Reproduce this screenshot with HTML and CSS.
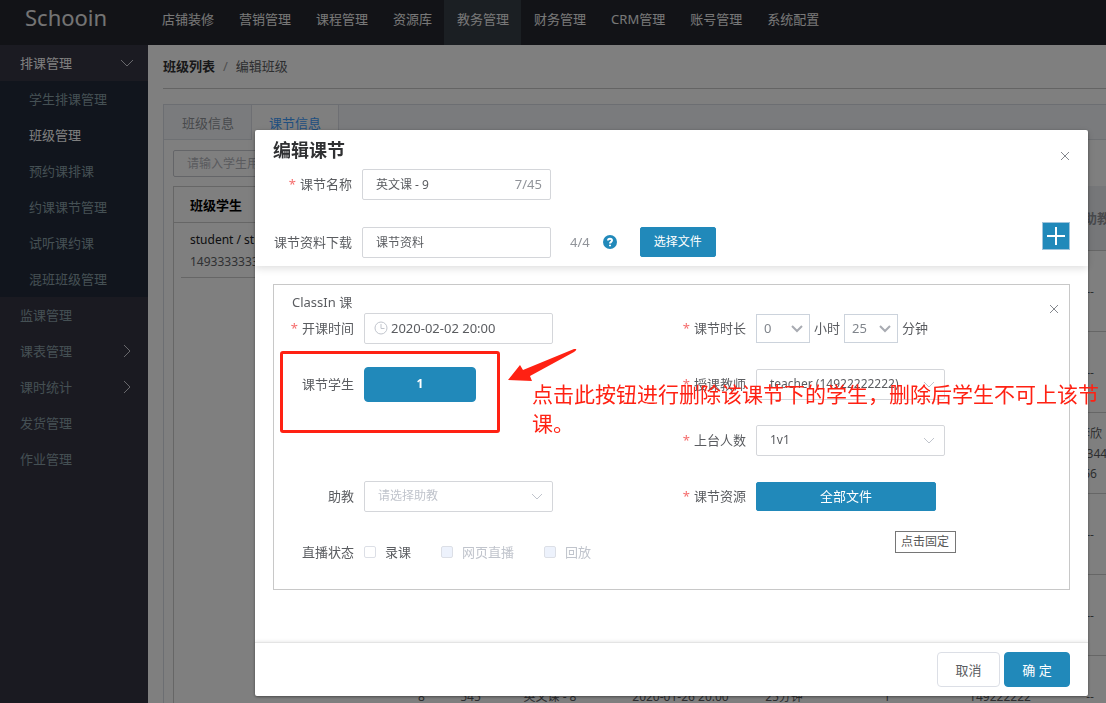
FILE: index.html
```html
<!DOCTYPE html>
<html lang="zh-CN">
<head>
<meta charset="utf-8">
<meta name="viewport" content="width=device-width, initial-scale=1">
<title>编辑课节 - Schooin</title>
<link rel="stylesheet" href="styles.css">
</head>
<body>
<div class="app">
  <header class="topbar">
    <div class="logo">Schooin</div>
    <nav class="topnav">
      <a href="#">店铺装修</a>
      <a href="#">营销管理</a>
      <a href="#">课程管理</a>
      <a href="#">资源库</a>
      <a href="#" class="active">教务管理</a>
      <a href="#">财务管理</a>
      <a href="#">CRM管理</a>
      <a href="#">账号管理</a>
      <a href="#">系统配置</a>
    </nav>
  </header>
  <div class="shell">
    <nav class="sidebar">
      <a href="#" class="menu-item open">排课管理
        <svg class="chevron" viewBox="0 0 14 14"><path d="M1 4l6 6 6-6"/></svg>
      </a>
      <div class="submenu">
        <a href="#" class="menu-item">学生排课管理</a>
        <a href="#" class="menu-item current">班级管理</a>
        <a href="#" class="menu-item">预约课排课</a>
        <a href="#" class="menu-item">约课课节管理</a>
        <a href="#" class="menu-item">试听课约课</a>
        <a href="#" class="menu-item">混班班级管理</a>
      </div>
      <a href="#" class="menu-item">监课管理</a>
      <a href="#" class="menu-item">课表管理
        <svg class="chevron" viewBox="0 0 14 14"><path d="M4 1l6 6-6 6"/></svg>
      </a>
      <a href="#" class="menu-item">课时统计
        <svg class="chevron" viewBox="0 0 14 14"><path d="M4 1l6 6-6 6"/></svg>
      </a>
      <a href="#" class="menu-item">发货管理</a>
      <a href="#" class="menu-item">作业管理</a>
    </nav>
    <main class="content">
      <div class="breadcrumb"><a href="#">班级列表</a><span class="slash">/</span><span>编辑班级</span></div>
      <section class="tabs">
        <div class="tab-bar">
          <button type="button" class="tab">班级信息</button>
          <button type="button" class="tab selected">课节信息</button>
        </div>
        <div class="tab-body">
          <input class="search" type="text" placeholder="请输入学生用户名" aria-label="搜索学生">
          <div class="columns">
            <div class="students">
              <h2>班级学生</h2>
              <div class="student">
                <div>student / student</div>
                <div class="phone">14933333333</div>
              </div>
            </div>
            <div class="table-wrap">
              <table class="lessons">
                <colgroup><col class="c-index"><col class="c-id"><col class="c-name"><col class="c-time"><col class="c-length"><col class="c-count"><col class="c-teacher"><col class="c-helper"></colgroup>
                <thead><tr><th></th><th></th><th></th><th></th><th></th><th></th><th></th><th class="helper">助教</th></tr></thead>
                <tbody>
                  <tr><td></td><td></td><td></td><td></td><td></td><td></td><td></td><td>--</td></tr>
                  <tr><td></td><td></td><td></td><td></td><td></td><td></td><td></td><td>--</td></tr>
                  <tr><td></td><td></td><td></td><td></td><td></td><td></td><td></td><td>李欣<br>149334455<br>56</td></tr>
                  <tr><td></td><td></td><td></td><td></td><td></td><td></td><td></td><td>--</td></tr>
                  <tr><td></td><td></td><td></td><td></td><td></td><td></td><td></td><td>--</td></tr>
                  <tr><td>8</td><td>545</td><td>英文课 - 8</td><td>2020-01-26 20:00</td><td>25分钟</td><td>1</td><td>149222222</td><td>--</td></tr>
                </tbody>
              </table>
            </div>
          </div>
        </div>
      </section>
    </main>
  </div>
</div>

<div class="mask">
  <form class="modal" role="dialog" aria-labelledby="modal-title">
    <header class="modal-head">
      <div class="title-row">
        <h1 id="modal-title">编辑课节</h1>
        <button type="button" class="close" aria-label="关闭"><svg viewBox="0 0 10 10"><path d="M1 1l8 8M9 1l-8 8"/></svg></button>
      </div>
      <div class="field">
        <label class="label required" for="lesson-name">课节名称</label>
        <div class="control wide">
          <input id="lesson-name" type="text" value="英文课 - 9">
          <span class="counter">7/45</span>
        </div>
      </div>
      <div class="field material">
        <label class="label" for="material">课节资料下载</label>
        <div class="control wide"><input id="material" type="text" value="课节资料"></div>
        <span class="quota">4/4</span>
        <svg class="help" viewBox="0 0 14 14"><circle cx="7" cy="7" r="7"/><path d="M5 5.6C5 3.1 9 3.1 9 5.5C9 6.9 7 6.8 7 8.5M7 9.7v1.6"/></svg>
        <button type="button" class="btn primary pick">选择文件</button>
        <button type="button" class="add" aria-label="添加"><svg viewBox="0 0 18 18"><path d="M9 0v18M0 9h18"/></svg></button>
      </div>
    </header>

    <div class="modal-body">
      <section class="card">
        <div class="card-title">ClassIn 课</div>
        <button type="button" class="close card-close" aria-label="移除"><svg viewBox="0 0 10 10"><path d="M1 1l8 8M9 1l-8 8"/></svg></button>
        <div class="rows">
          <div class="field">
            <label class="label required" for="start">开课时间</label>
            <div class="control wide">
              <svg class="clock" viewBox="0 0 14 14"><circle cx="7" cy="7" r="6"/><path d="M7 3v4.5h3.5"/></svg>
              <input id="start" class="date" type="text" value="2020-02-02 20:00">
            </div>
          </div>
          <div class="field">
            <label class="label required" for="hours">课节时长</label>
            <div class="duration">
              <span class="control small"><select id="hours"><option>0</option></select><svg class="arrow" viewBox="0 0 12 12"><path d="M1 4l5 5 5-5"/></svg></span>
              <span>小时</span>
              <span class="control small"><select aria-label="分钟"><option>25</option></select><svg class="arrow" viewBox="0 0 12 12"><path d="M1 4l5 5 5-5"/></svg></span>
              <span>分钟</span>
            </div>
          </div>
          <div class="field">
            <label class="label" for="students">课节学生</label>
            <button id="students" type="button" class="btn primary count">1</button>
          </div>
          <div class="field">
            <label class="label required" for="teacher">授课教师</label>
            <div class="control wide"><select id="teacher"><option>teacher (14922222222)</option></select><svg class="arrow" viewBox="0 0 12 12"><path d="M1 4l5 5 5-5"/></svg></div>
          </div>
          <div></div>
          <div class="field">
            <label class="label required" for="seats">上台人数</label>
            <div class="control wide"><select id="seats"><option>1v1</option></select><svg class="arrow" viewBox="0 0 12 12"><path d="M1 4l5 5 5-5"/></svg></div>
          </div>
          <div class="field">
            <label class="label" for="assistant">助教</label>
            <div class="control wide"><select id="assistant" class="empty"><option>请选择助教</option></select><svg class="arrow" viewBox="0 0 12 12"><path d="M1 4l5 5 5-5"/></svg></div>
          </div>
          <div class="field">
            <label class="label required" for="files">课节资源</label>
            <button id="files" type="button" class="btn primary files">全部文件</button>
          </div>
          <div class="field">
            <span class="label">直播状态</span>
            <div class="checks">
              <label><input type="checkbox">录课</label>
              <label class="disabled"><input type="checkbox" disabled>网页直播</label>
              <label class="disabled"><input type="checkbox" disabled>回放</label>
            </div>
          </div>
        </div>
        <span class="tooltip">点击固定</span>
      </section>
    </div>

    <footer class="modal-foot">
      <button type="button" class="btn cancel">取消</button>
      <button type="submit" class="btn primary ok">确 定</button>
    </footer>
  </form>
</div>

<div class="callout-box"></div>
<svg class="callout-arrow" viewBox="0 0 72 34"><path d="M70 1Q71 2 68 4L24 28L26 33L2 32L14 17L17 22L68 1Z"/></svg>
<p class="callout-text">点击此按钮进行删除该课节下的学生，删除后学生不可上该节课。</p>
</body>
</html>
```
FILE: styles.css
```css
* { box-sizing: border-box; }

body {
  margin: 0;
  font: 13px/20px "Noto Sans", "Noto Sans CJK SC", sans-serif;
  color: #5a5c60;
  background: #fff;
}

a { color: inherit; text-decoration: none; }
button, input, select { font: inherit; color: inherit; margin: 0; }
button { cursor: pointer; }
svg { fill: none; stroke: currentColor; flex: none; }

/* page shell */
.app { display: flex; flex-direction: column; height: 100vh; overflow: hidden; }
.topbar { display: flex; height: 45px; flex: none; background: #24262e; color: #fff; }
.logo { width: 149px; padding-left: 25px; font-size: 22px; line-height: 34px; color: #e8e8e8; }
.topnav { display: flex; white-space: nowrap; }
.topnav a { padding: 0 12px 0 13px; line-height: 39px; color: #f0f0f0; }
.topnav .active { background: #363e46; }
.shell { display: flex; flex: 1; min-height: 0; }

.sidebar { width: 148px; flex: none; background: #343442; color: #8ba0a8; line-height: 18px; }
.menu-item { display: flex; align-items: center; justify-content: space-between; height: 36px; padding: 0 14px 1px 20px; }
.menu-item.open { color: #fff; background: #363644; }
.submenu { background: #222b3a; }
.submenu .menu-item { padding-left: 29px; }
.submenu .current { color: #fff; }
.chevron { width: 14px; height: 14px; color: #d0d0d8; }

.content { flex: 1; min-width: 0; padding-left: 15px; overflow: hidden; }
.breadcrumb { height: 44px; line-height: 42px; border-bottom: 1px solid #c8c8c8; }
.breadcrumb a { font-weight: 700; color: #303133; }
.slash { margin: 0 8px; color: #a0a0a0; }
.tabs { margin-top: 15px; border: 1px solid #d8dce4; border-right: 0; min-height: 650px; }
.tab-bar { display: flex; height: 35px; background: #f5f7fa; border-bottom: 1px solid #dde0e6; }
.tab { height: 35px; padding: 0 17px 0 18px; border: 0; border-right: 1px solid #dcdfe6; background: transparent; color: #909399; }
.tab.selected { padding-left: 17px; background: #fff; color: #409eff; }
.tab-body { padding: 10px 0 0 9px; }
.search { display: block; width: 200px; height: 27px; padding: 0 13px; border: 1px solid #c8cad0; background: #fff; border-radius: 2px; font-size: 12px; }
.search::placeholder { color: #b4b6bc; opacity: 1; }
.columns { display: flex; gap: 7px; margin-top: 9px; }
.students { width: 209px; flex: none; min-height: 600px; border: 1px solid #ccc; border-right: 0; }
.students h2 { margin: 0; height: 36px; padding-left: 16px; font-size: 13px; line-height: 36px; color: #000; border-bottom: 1px solid #ccc; }
.student { margin-left: 7px; padding: 6px 0 4px 9px; font-size: 12px; line-height: 22px; color: #202124; border-bottom: 1px solid #ccc; }
.phone { color: #606266; }
.table-wrap { flex: 1; overflow: hidden; }
.lessons { table-layout: fixed; width: 745px; border-collapse: collapse; font-size: 12px; text-align: center; }
.lessons th { height: 64px; padding: 0; background: #edeff3; border-bottom: 1px solid #ccc; }
.lessons .helper { padding-left: 38px; text-align: left; font-size: 13px; color: #909399; }
.lessons td { height: 81px; padding: 2px 0 0; border-bottom: 1px solid #ccc; }
.c-index { width: 65px; }
.c-id { width: 33px; }
.c-name { width: 126px; }
.c-time { width: 135px; }
.c-length { width: 72px; }
.c-count { width: 134px; }
.c-teacher { width: 92px; }
.c-helper { width: 88px; }

/* dialog */
.mask { position: fixed; inset: 0; display: flex; padding: 130px 18px 7px 255px; background: rgba(0, 0, 0, .5); }
.modal { flex: 1; display: flex; flex-direction: column; min-width: 0; background: #fff; border-radius: 2px; box-shadow: 0 1px 3px rgba(0, 0, 0, .4); }
.modal-head { padding: 8px 18px 8px; box-shadow: 0 2px 8px rgba(0, 0, 0, .14); }
.title-row { display: flex; justify-content: space-between; height: 30px; }
.title-row h1 { margin: 0; font-size: 18px; line-height: 24px; color: #303133; }
.close { display: block; padding: 0; border: 0; background: none; color: #85888e; }
.close svg { display: block; width: 10px; height: 10px; }
.title-row .close { width: 12px; height: 10px; margin-top: 13px; }
.title-row .close svg { margin-left: 2px; }

.field { display: flex; align-items: center; gap: 10px; height: 32px; }
.label { width: 80px; flex: none; text-align: right; white-space: nowrap; }
.required::before { content: "*"; margin-right: 4px; color: #f56c6c; }
.material { margin-top: 26px; }
.modal-head .label { width: 79px; }

.control { position: relative; display: flex; align-items: center; height: 31px; border: 1px solid #d4d6da; border-radius: 2px; }
.wide { width: 189px; }
.control input { flex: 1; width: 100%; min-width: 0; height: 29px; padding: 0 13px; border: 0; outline: 0; background: none; font-size: 12px; }
.counter { padding-right: 8px; color: #909399; }
.clock { width: 14px; height: 14px; margin-left: 9px; color: #c0c4cc; }
.control .date { padding: 0 3px; font-size: 13px; }
.control select { width: 100%; height: 29px; padding: 0 13px; border: 0; outline: 0; appearance: none; background: none; font-size: 12px; }
.control .empty { color: #c0c4cc; }
.arrow { position: absolute; right: 9px; width: 12px; height: 12px; color: #c0c4cc; pointer-events: none; }
.duration { display: flex; align-items: center; gap: 4px; }
.small { width: 54px; height: 29px; border-color: #ccd3dc; border-radius: 0; }
.small select { height: 27px; padding: 0 7px; font-size: 13px; color: #80858c; }
.small .arrow { right: 6px; color: #a8abb2; stroke-width: 2; }

.quota { margin-left: 9px; color: #909399; }
.help { width: 14px; height: 14px; margin-left: 3px; fill: #2189ba; stroke: none; }
.help path { fill: none; stroke: #fff; stroke-width: 2; }
.btn { padding: 0; border: 1px solid #dcdfe6; border-radius: 4px; background: #fff; }
.primary { border-color: #2189ba; background: #2189ba; color: #fff; }
.pick { width: 76px; height: 30px; margin-left: 13px; border-radius: 2px; font-size: 12px; }
.add { display: flex; align-items: center; justify-content: center; width: 28px; height: 28px; margin: 0 0 12px auto; padding: 0; border: 1px solid #9fc4dc; background: #2189ba; color: #fff; }
.add svg { width: 18px; height: 18px; stroke-width: 2; }

.modal-body { flex: 1; padding: 18px 18px 0; }
.card { position: relative; padding: 7px 0 21px; border: 1px solid #c8c8c8; }
.card-title { padding-left: 18px; }
.card-close { position: absolute; top: 19px; right: 10px; }
.rows { display: grid; grid-template-columns: minmax(0, 398px) 1fr; row-gap: 24px; }
.rows .field:nth-child(even) .label { width: 74px; }
.count { width: 112px; height: 35px; font-weight: 700; font-size: 12px; }
.files { width: 180px; height: 29px; border-radius: 2px; }
.checks { display: flex; gap: 30px; white-space: nowrap; }
.checks label { display: flex; align-items: center; gap: 9px; }
.checks input { appearance: none; width: 12px; height: 12px; border: 1px solid #dcdfe6; border-radius: 2px; background: #fff; }
.checks .disabled { color: #c0c4cc; }
.checks .disabled input { background: #edf2fc; }
.tooltip { position: absolute; right: 113px; bottom: 36px; height: 22px; padding: 0 6px 0 5px; border: 1px solid #767676; background: #fff; font-size: 12px; color: #575757; }
.modal-foot { display: flex; justify-content: flex-end; gap: 4px; padding: 9px 18px 9px; border-top: 1px solid #e4e4e4; box-shadow: 0 -1px 3px rgba(0, 0, 0, .08); }
.cancel { width: 63px; height: 35px; }
.ok { width: 66px; height: 35px; }

/* annotations drawn above the dialog */
.callout-box { position: absolute; left: 280px; top: 351px; width: 220px; height: 82px; border: 3px solid #ff2113; border-radius: 3px; }
.callout-arrow { position: absolute; left: 506px; top: 348px; width: 72px; height: 34px; fill: #ff2113; stroke: none; }
.callout-text { position: absolute; left: 532px; top: 380px; width: 568px; margin: 0; font-size: 21px; line-height: 29px; color: #ff2113; }
```
